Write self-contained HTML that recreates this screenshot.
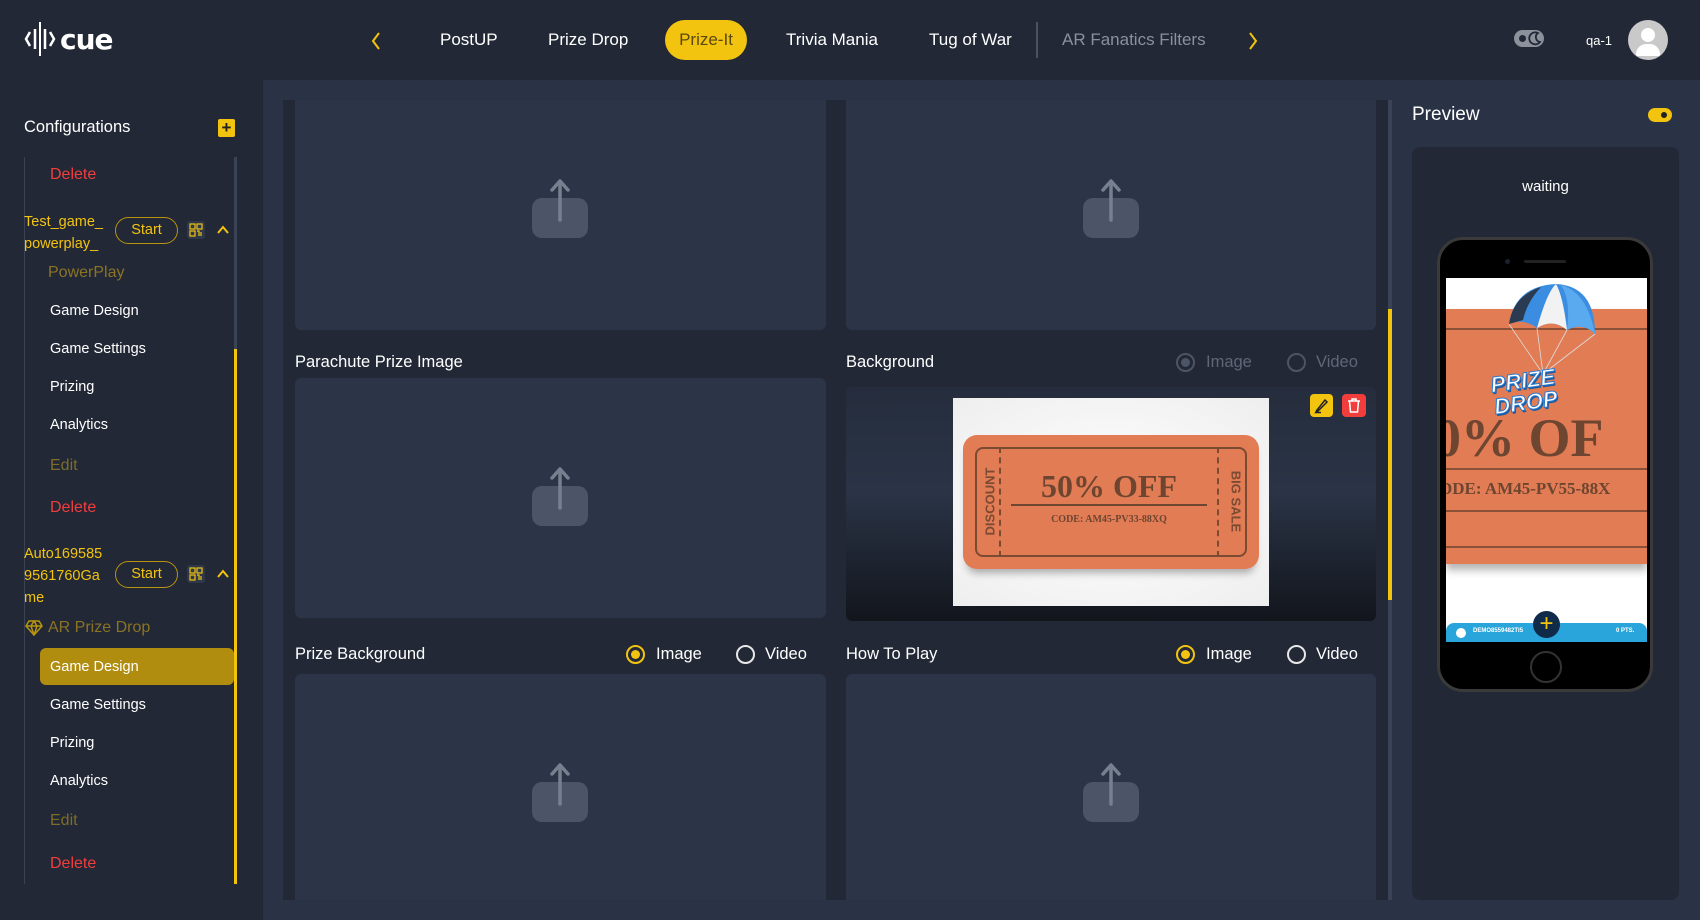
<!DOCTYPE html>
<html><head><meta charset="utf-8"><style>
*{box-sizing:border-box;margin:0;padding:0}
body{width:1700px;height:920px;overflow:hidden;background:#222836;font-family:"Liberation Sans",sans-serif;color:#fff;position:relative}
.a{position:absolute}
.nav{font-size:17px;top:30px;white-space:nowrap}
.sb{font-size:14.5px;white-space:nowrap}
.card{position:absolute;background:#2c3548;border-radius:6px}
.up{position:absolute;width:56px;height:60px}
.lbl{font-size:16.5px;top:353px}
.rad{position:absolute;width:19px;height:19px;border-radius:50%;border:2px solid #e8e8e8}
.rad.on{border-color:#f2c40f}
.rad.on::after{content:"";position:absolute;left:3px;top:3px;width:9px;height:9px;border-radius:50%;background:#f2c40f}
.rad.dis{border-color:#4c5566}
.rad.dis.on::after{background:#4c5566}
.rt{position:absolute;font-size:16.5px}
.pill{position:absolute;border:1.5px solid #b89410;border-radius:14px;color:#f2c40f;font-size:14.5px;text-align:center;line-height:24px;width:63px;height:27px}
.qr{position:absolute;width:18px;height:18px;background:#2f3849;border-radius:3px}
</style></head><body>
<svg class="a" style="left:24px;top:20px" width="100" height="38" viewBox="0 0 100 38">
<path d="M6 12 L2 19 L6 26" stroke="#fff" stroke-width="2.5" fill="none"/>
<line x1="11" y1="9" x2="11" y2="29" stroke="#fff" stroke-width="2.5"/>
<line x1="16" y1="2" x2="16" y2="36" stroke="#fff" stroke-width="2"/>
<line x1="21" y1="9" x2="21" y2="29" stroke="#fff" stroke-width="2.5"/>
<path d="M26 12 L30 19 L26 26" stroke="#fff" stroke-width="2.5" fill="none"/>
<text x="36" y="29" font-family="DejaVu Sans" font-weight="bold" font-size="28" fill="#fff" letter-spacing="-1">cue</text>
</svg>
<svg class="a" style="left:370px;top:31px" width="12" height="20"><path d="M9 2 L3 10 L9 18" stroke="#f2c40f" stroke-width="2" fill="none"/></svg>
<div class="a nav" style="left:440px">PostUP</div>
<div class="a nav" style="left:548px">Prize Drop</div>
<div class="a" style="left:665px;top:20px;width:82px;height:40px;border-radius:20px;background:#f2c40f;color:#5a4a10;font-size:17px;text-align:center;line-height:40px">Prize-It</div>
<div class="a nav" style="left:786px">Trivia Mania</div>
<div class="a nav" style="left:929px">Tug of War</div>
<div class="a" style="left:1036px;top:22px;width:2px;height:36px;background:#4a5263"></div>
<div class="a nav" style="left:1062px;color:#8a909c">AR Fanatics Filters</div>
<svg class="a" style="left:1247px;top:31px" width="12" height="20"><path d="M3 2 L9 10 L3 18" stroke="#f2c40f" stroke-width="2" fill="none"/></svg>
<div class="a" style="left:1514px;top:30px;width:30px;height:17px;border-radius:9px;background:#8c919b"></div>
<div class="a" style="left:1519px;top:35px;width:7px;height:7px;border-radius:50%;background:#222836"></div>
<svg class="a" style="left:1528px;top:31px" width="14" height="15"><path d="M10 2 A6 6 0 1 0 12 11 A5 5 0 0 1 10 2Z" fill="none" stroke="#222836" stroke-width="1.8"/></svg>
<div class="a" style="left:1586px;top:33px;font-size:13px">qa-1</div>
<div class="a" style="left:1628px;top:20px;width:40px;height:40px;border-radius:50%;background:#c9c9c9;overflow:hidden">
<div class="a" style="left:13px;top:8px;width:14px;height:14px;border-radius:50%;background:#fff"></div>
<div class="a" style="left:8px;top:24px;width:24px;height:12px;border-radius:12px 12px 2px 2px;background:#fff"></div></div>

<div class="a" style="left:24px;top:118px;font-size:16.5px">Configurations</div>
<div class="a" style="left:218px;top:119px;width:17px;height:18px;background:#f2c40f;border-radius:2px;color:#222;font-weight:bold;font-size:17px;line-height:18px;text-align:center">+</div>
<div class="a" style="left:24px;top:157px;width:1px;height:727px;background:#3a4356"></div>
<div class="a" style="left:234px;top:157px;width:3px;height:727px;background:#3a4356"></div>
<div class="a" style="left:234px;top:349px;width:3px;height:535px;background:#f2c40f"></div>
<div class="a sb" style="left:50px;top:166px;color:#f23d3d;font-size:16px">Delete</div>
<div class="a sb" style="left:24px;top:211px;color:#f2c40f;line-height:22px">Test_game_<br>powerplay_</div>
<div class="pill" style="left:115px;top:217px">Start</div>
<div class="qr" style="left:187px;top:221px"></div>
<svg class="a" style="left:189px;top:223px" width="14" height="14"><g fill="none" stroke="#f2c40f" stroke-width="1.2"><rect x="1" y="1" width="5" height="5"/><rect x="8" y="1" width="5" height="5"/><rect x="1" y="8" width="5" height="5"/><path d="M8 8h2v5M12 9v4"/></g></svg>
<svg class="a" style="left:217px;top:225px" width="12" height="9"><path d="M1 8 L6 2 L11 8" stroke="#f2c40f" stroke-width="2" fill="none"/></svg>
<div class="a sb" style="left:48px;top:264px;color:#8a7424;font-size:16px">PowerPlay</div>
<div class="a sb" style="left:50px;top:303px">Game Design</div>
<div class="a sb" style="left:50px;top:341px">Game Settings</div>
<div class="a sb" style="left:50px;top:379px">Prizing</div>
<div class="a sb" style="left:50px;top:417px">Analytics</div>
<div class="a sb" style="left:50px;top:457px;color:#7e6c2a;font-size:16px">Edit</div>
<div class="a sb" style="left:50px;top:499px;color:#f23d3d;font-size:16px">Delete</div>
<div class="a sb" style="left:24px;top:543px;color:#f2c40f;line-height:22px">Auto169585<br>9561760Ga<br>me</div>
<div class="pill" style="left:115px;top:561px">Start</div>
<div class="qr" style="left:187px;top:565px"></div>
<svg class="a" style="left:189px;top:567px" width="14" height="14"><g fill="none" stroke="#f2c40f" stroke-width="1.2"><rect x="1" y="1" width="5" height="5"/><rect x="8" y="1" width="5" height="5"/><rect x="1" y="8" width="5" height="5"/><path d="M8 8h2v5M12 9v4"/></g></svg>
<svg class="a" style="left:217px;top:569px" width="12" height="9"><path d="M1 8 L6 2 L11 8" stroke="#f2c40f" stroke-width="2" fill="none"/></svg>
<svg class="a" style="left:25px;top:620px" width="18" height="16"><path d="M4 1h10l3 5-8 9-8-9z M1 6h16 M9 15 6 6 9 1 12 6z" fill="none" stroke="#b89410" stroke-width="1.5"/></svg>
<div class="a sb" style="left:48px;top:619px;color:#8a7424;font-size:16px">AR Prize Drop</div>
<div class="a" style="left:40px;top:648px;width:194px;height:37px;background:#b08c0f;border-radius:6px"></div>
<div class="a sb" style="left:50px;top:659px">Game Design</div>
<div class="a sb" style="left:50px;top:697px">Game Settings</div>
<div class="a sb" style="left:50px;top:735px">Prizing</div>
<div class="a sb" style="left:50px;top:773px">Analytics</div>
<div class="a sb" style="left:50px;top:812px;color:#7e6c2a;font-size:16px">Edit</div>
<div class="a sb" style="left:50px;top:855px;color:#f23d3d;font-size:16px">Delete</div>

<div class="a" style="left:263px;top:80px;width:1437px;height:840px;background:#2a3345"></div>
<div class="a" style="left:283px;top:100px;width:1105px;height:800px;background:#222836"></div>
<div class="a" style="left:1388px;top:100px;width:4px;height:800px;background:#3a4356"></div>
<div class="a" style="left:1388px;top:309px;width:4px;height:291px;background:#f2c40f"></div>

<div class="card" style="left:295px;top:100px;width:531px;height:230px;border-radius:0 0 6px 6px"></div>
<div class="card" style="left:846px;top:100px;width:530px;height:230px;border-radius:0 0 6px 6px"></div>
<div class="card" style="left:295px;top:378px;width:531px;height:240px"></div>
<div class="card" style="left:846px;top:387px;width:530px;height:234px;background:linear-gradient(#252d3d 0%,#2a3446 45%,#12151c 100%)"></div>
<div class="card" style="left:295px;top:674px;width:531px;height:226px;border-radius:6px 6px 0 0"></div>
<div class="card" style="left:846px;top:674px;width:530px;height:226px;border-radius:6px 6px 0 0"></div>

<svg width="0" height="0" style="position:absolute"><defs><g id="upi"><rect x="0" y="20" width="56" height="40" rx="10" fill="#4b5567"/><line x1="28" y1="4" x2="28" y2="42" stroke="#76808f" stroke-width="3.5" stroke-linecap="round"/><path d="M20 12 L28 3 L36 12" stroke="#76808f" stroke-width="3.5" fill="none" stroke-linecap="round" stroke-linejoin="round"/></g></defs></svg>
<svg class="up" style="left:532px;top:178px"><use href="#upi"/></svg>
<svg class="up" style="left:1083px;top:178px"><use href="#upi"/></svg>
<svg class="up" style="left:532px;top:466px"><use href="#upi"/></svg>
<svg class="up" style="left:532px;top:762px"><use href="#upi"/></svg>
<svg class="up" style="left:1083px;top:762px"><use href="#upi"/></svg>

<div class="a lbl" style="left:295px">Parachute Prize Image</div>
<div class="a lbl" style="left:846px">Background</div>
<div class="rad dis on" style="left:1176px;top:353px"></div><div class="rt" style="left:1206px;top:353px;color:#5e6778">Image</div>
<div class="rad dis" style="left:1287px;top:353px"></div><div class="rt" style="left:1316px;top:353px;color:#5e6778">Video</div>

<div class="a lbl" style="left:295px;top:645px">Prize Background</div>
<div class="rad on" style="left:626px;top:645px"></div><div class="rt" style="left:656px;top:645px">Image</div>
<div class="rad" style="left:736px;top:645px"></div><div class="rt" style="left:765px;top:645px">Video</div>
<div class="a lbl" style="left:846px;top:645px">How To Play</div>
<div class="rad on" style="left:1176px;top:645px"></div><div class="rt" style="left:1206px;top:645px">Image</div>
<div class="rad" style="left:1287px;top:645px"></div><div class="rt" style="left:1316px;top:645px">Video</div>

<div class="a" style="left:953px;top:398px;width:316px;height:208px;background:radial-gradient(#fff,#eee);overflow:hidden">
<div class="a" style="left:10px;top:37px;width:296px;height:134px;background:#e27c55;border-radius:14px;box-shadow:0 8px 8px -4px rgba(0,0,0,.3)"></div>
<div class="a" style="left:22px;top:49px;width:272px;height:110px;border:2px solid #7a4a32;border-radius:8px"></div>
<div class="a" style="left:46px;top:49px;width:0;height:110px;border-left:2px dashed #7a4a32"></div>
<div class="a" style="left:264px;top:49px;width:0;height:110px;border-left:2px dashed #7a4a32"></div>
<div class="a" style="left:2px;top:96px;width:70px;text-align:center;transform:rotate(-90deg);font-size:13px;font-weight:bold;color:#7a4a32">DISCOUNT</div>
<div class="a" style="left:248px;top:96px;width:70px;text-align:center;transform:rotate(90deg);font-size:13px;font-weight:bold;color:#7a4a32">BIG SALE</div>
<div class="a" style="left:58px;top:70px;width:196px;text-align:center;font-family:'Liberation Serif',serif;font-weight:bold;font-size:32px;color:#6e4530;border-bottom:2px solid #6e4530;line-height:36px">50% OFF</div>
<div class="a" style="left:58px;top:116px;width:196px;text-align:center;font-family:'Liberation Serif',serif;font-weight:bold;font-size:10px;color:#6e4530">CODE: AM45-PV33-88XQ</div>
</div>
<div class="a" style="left:1310px;top:394px;width:23px;height:23px;background:#f2c40f;border-radius:4px"></div>
<svg class="a" style="left:1313px;top:397px" width="17" height="17"><path d="M4 13 L3 15 L5 14 L14 5 L12 3 Z M2 15.5h6" stroke="#222" stroke-width="1.5" fill="none"/></svg>
<div class="a" style="left:1342px;top:394px;width:24px;height:23px;background:#f23d3d;border-radius:4px"></div>
<svg class="a" style="left:1346px;top:397px" width="16" height="17"><path d="M2 4h12 M6 4V2h4v2 M3.5 4l1 11h7l1-11" stroke="#fff" stroke-width="1.5" fill="none"/></svg>

<div class="a" style="left:1412px;top:104px;font-size:19px">Preview</div>
<div class="a" style="left:1648px;top:108px;width:24px;height:14px;border-radius:7px;background:#f2c40f"></div>
<div class="a" style="left:1661px;top:112px;width:6px;height:6px;border-radius:50%;background:#222"></div>
<div class="a" style="left:1412px;top:147px;width:267px;height:753px;background:#222836;border-radius:8px"></div>
<div class="a" style="left:1412px;top:178px;width:267px;text-align:center;font-size:15px">waiting</div>
<div class="a" style="left:1437px;top:237px;width:216px;height:455px;background:#000;border-radius:26px;border:3px solid #3a3a3a"></div>
<div class="a" style="left:1524px;top:260px;width:42px;height:3px;background:#222;border-radius:2px"></div>
<div class="a" style="left:1505px;top:259px;width:5px;height:5px;background:#1a2030;border-radius:50%"></div>
<div class="a" style="left:1530px;top:651px;width:32px;height:32px;border:2px solid #333;border-radius:50%"></div>
<div class="a" style="left:1446px;top:278px;width:201px;height:364px;background:#fff;overflow:hidden">
<div class="a" style="left:0;top:31px;width:201px;height:255px;background:#e27c55;box-shadow:0 6px 8px rgba(0,0,0,.3)"></div>
<div class="a" style="left:0;top:50px;width:201px;height:2px;background:#8a5038"></div>
<div class="a" style="left:0;top:190px;width:201px;height:2px;background:#8a5038"></div>
<div class="a" style="left:0;top:232px;width:201px;height:2px;background:#8a5038"></div>
<div class="a" style="left:0;top:268px;width:201px;height:2px;background:#8a5038"></div>
<div class="a" style="left:-12px;top:132px;font-family:'Liberation Serif',serif;font-weight:bold;font-size:54px;color:#6e4530;white-space:nowrap;line-height:56px">0% OF</div>
<div class="a" style="left:-6px;top:201px;font-family:'Liberation Serif',serif;font-weight:bold;font-size:17px;color:#6e4530;white-space:nowrap">DDE: AM45-PV55-88X</div>
<svg class="a" style="left:55px;top:4px" width="100" height="100" viewBox="0 0 100 100"><g stroke="#ddd" stroke-width=".8"><path d="M8 42 L42 92 M36 46 L42 92 M66 48 L42 92 M94 52 L42 92"/></g><path d="M8 42 Q14 4 55 2 Q94 4 94 52 Q82 40 66 48 Q52 36 36 46 Q22 36 8 42Z" fill="#3a8de0"/><path d="M36 46 Q46 10 55 2 Q62 14 66 48 Q52 36 36 46Z" fill="#f2f2f2"/><path d="M8 42 Q12 14 40 5 Q26 20 22 38Z" fill="#2a3a50"/><path d="M66 48 Q70 18 60 3 Q86 10 94 52 Q82 40 66 48Z" fill="#5aaaf0"/></svg>
<div class="a" style="left:46px;top:92px;font-family:'Liberation Sans';font-weight:bold;font-style:italic;font-size:22px;line-height:22px;color:#fff;-webkit-text-stroke:1px #2a7ad0;transform:rotate(-8deg);text-align:center;text-shadow:1px 2px 0 #1a5aa0">PRIZE<br>DROP</div>
<div class="a" style="left:0;top:345px;width:201px;height:19px;background:#2aa5dc;border-radius:8px 8px 0 0"></div>
<div class="a" style="left:10px;top:350px;width:10px;height:10px;border-radius:50%;background:#fff"></div>
<div class="a" style="left:27px;top:350px;font-size:6px;font-weight:bold;color:#fff">DEMO8559482TI5</div>
<div class="a" style="left:170px;top:350px;font-size:6px;font-weight:bold;color:#fff">0 PTS.</div>
<div class="a" style="left:87px;top:333px;width:27px;height:27px;border-radius:50%;background:#102a4a;color:#f2c40f;font-size:24px;line-height:26px;text-align:center">+</div>
</div>
</body></html>
